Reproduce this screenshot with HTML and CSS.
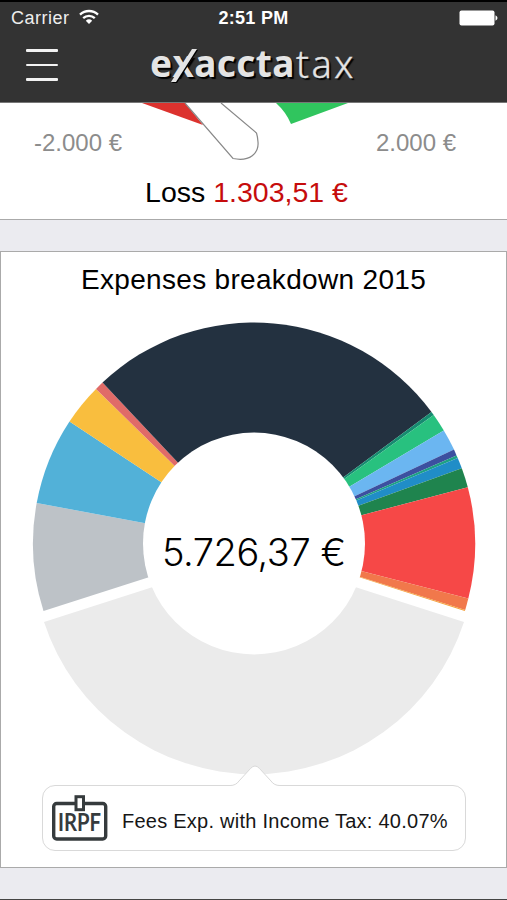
FILE: index.html
```
<!doctype html>
<html>
<head>
<meta charset="utf-8">
<title>Exaccta Tax</title>
<link rel="stylesheet" href="styles.css">
</head>
<body>
<header class="topbar">
  <div class="status">
    <div class="carrier"><span>Carrier</span>
      <svg width="20" height="16" viewBox="0 0 20 16"><g fill="none" stroke="#fff" stroke-width="2.300"><path d="M1 5.6a13 13 0 0 1 18 0"/><path d="M4.2 9.200a8.4 8.4 0 0 1 11.6 0"/></g><path d="M6.8 11.8a4.8 4.8 0 0 1 6.4 0L10 15z" fill="#fff"/></svg>
    </div>
    <div class="clock">2:51 PM</div>
    <div class="battery"><svg width="39" height="16" viewBox="0 0 39 16"><rect x=".5" y=".5" width="35" height="15" rx="2" fill="#fff"/><path d="M36.500 5.200q2 1 2 2.800t-2 2.800z" fill="#fff"/></svg></div>
  </div>
  <nav class="nav">
    <button class="menu" aria-label="Menu"><i></i><i></i><i></i></button>
    <div class="logo"><b>e</b><b class="x">x</b><b>accta</b><span>tax</span>
      <svg class="slash" width="28" height="36" viewBox="0 0 28 36"><path d="M21 1h5L5 34H0z" fill="#e4e4e4"/></svg>
    </div>
  </nav>
</header>
<main>
<section class="card balance">
  <svg class="gauge" width="507" height="62" viewBox="0 0 507 62">
    <path d="M142 0h43l18 22z" fill="#dc322e"/>
    <path d="M276 0h72l-57 21q-5-12-15-21z" fill="#30c55e"/>
    <path d="M185 0l48 55.500C250 59 259 50 258 39Q257.500 33 256.500 30L221 0" fill="#fff" stroke="#888" stroke-width="1.200"/>
  </svg>
  <div class="limits"><span>-2.000 €</span><span>2.000 €</span></div>
  <p class="result">Loss <span class="neg">1.303,51 €</span></p>
</section>
<section class="card breakdown">
  <h2>Expenses breakdown 2015</h2>
  <svg class="donut" width="505" height="478" viewBox="1 300 505 478">
    <path fill="#ebebeb" d="M254 554.500L44 622A221 221 0 0 0 464 622z"/>
    <path fill="#bdc2c7" d="M254 543.500L43.500 611A221 221 0 0 1 36.700 503z"/>
    <path fill="#52b1d8" d="M254 543.500L36.700 503A221 221 0 0 1 69.500 421.500z"/>
    <path fill="#f9be3e" d="M254 543.500L69.500 421.500A221 221 0 0 1 96 389z"/>
    <path fill="#e06b68" d="M254 543.500L96 389A221 221 0 0 1 102.500 382.500z"/>
    <path fill="#233140" d="M254 543.500L102.500 382.500A221 221 0 0 1 431.500 412z"/>
    <path fill="#168b70" d="M254 543.500L431.500 412A221 221 0 0 1 433.700 415z"/>
    <path fill="#28c17f" d="M254 543.500L433.700 415A221 221 0 0 1 443.800 430.500z"/>
    <path fill="#6bb6f1" d="M254 543.500L443.800 430.500A221 221 0 0 1 454 449.500z"/>
    <path fill="#3c50a0" d="M254 543.500L454 449.500A221 221 0 0 1 456.500 455.500z"/>
    <path fill="#1da184" d="M254 543.500L456.500 455.500A221 221 0 0 1 457.700 458z"/>
    <path fill="#208dc7" d="M254 543.500L457.700 458A221 221 0 0 1 461.800 468.300z"/>
    <path fill="#1f844e" d="M254 543.500L461.800 468.300A221 221 0 0 1 467.800 487.300z"/>
    <path fill="#f64847" d="M254 543.500L467.800 487.300A221 221 0 0 1 468.300 598.500z"/>
    <path fill="#f1784b" d="M254 543.500L468.300 598.500A221 221 0 0 1 465.200 609.900z"/>
    <path fill="#f5a13c" d="M254 543.500L465.200 609.900A221 221 0 0 1 464.700 611z"/>
    <circle cx="254" cy="543.500" r="111" fill="#fff"/>
    <text class="total" x="254" y="566" text-anchor="middle" textLength="184">5.726,37 €</text>
  </svg>
  <div class="tip">
    <svg class="arrow" width="50" height="22" viewBox="0 0 50 22"><path d="M0 20.500Q6 20.500 9 16L20.500 3.500Q25-1.500 29.500 3.500L41 16Q44 20.500 50 20.500V22H0z" fill="#fff"/><path d="M0 20.500Q6 20.500 9 16L20.500 3.500Q25-1.500 29.500 3.500L41 16Q44 20.500 50 20.500" fill="none" stroke="#d9d9d9"/></svg>
    <svg class="irpf" width="56" height="46" viewBox="0 0 56 46"><g fill="none" stroke="#363b3d"><rect x="1.700" y="8.500" width="52" height="35.500" rx="3" stroke-width="3.400"/><rect x="24" y="1.700" width="7.500" height="13" fill="#fff" stroke-width="3"/></g><text x="27.500" y="35.500" text-anchor="middle" textLength="43" lengthAdjust="spacingAndGlyphs">IRPF</text></svg>
    <span>Fees Exp. with Income Tax: 40.07%</span>
  </div>
</section>
</main>
</body>
</html>
```
FILE: styles.css
```
*{box-sizing:border-box}
body{margin:0;height:900px;overflow:hidden;background:#ebebf0;border-bottom:1px solid #444;font-family:"Liberation Sans",Arial,sans-serif;color:#000}
svg{display:block}
.topbar{height:103px;background:#333;border-top:2px solid #000;border-bottom:1px solid #777;color:#fff}
.status{display:grid;grid-template-columns:1fr auto 1fr;align-items:center;height:33px;padding:0 9px 0 11px;font-size:18px}
.carrier{display:flex;align-items:center;gap:9px;color:#eee}
.carrier span{letter-spacing:.5px}
.carrier svg{margin-top:-3px}
.clock{font-weight:700;letter-spacing:.3px;margin-left:-2px}
.battery{justify-self:end;margin-top:-2px}
.nav{display:grid;grid-template-columns:150px 1fr;height:60px}
.menu{display:flex;flex-direction:column;gap:12px;width:32px;height:33px;margin:14px 0 0 26px;padding:0;border:0;background:none}
.menu i{width:32px;height:2.600px;background:#f2f2f2;border-radius:1px}
.logo{position:relative;display:flex;height:56px;align-items:center;font-family:"Noto Sans",sans-serif;font-size:37px;line-height:56px;color:#e4e4e4;text-shadow:2px 2px 1px #000}
.logo b{font-weight:700;letter-spacing:.4px}
.logo span{margin-left:1px;font-weight:300;font-size:38px;letter-spacing:2.6px;-webkit-text-stroke:.4px #e4e4e4}
.slash{position:absolute;left:21px;top:13px;filter:drop-shadow(1px 1px 0 #000)}
.card{background:#fff;border:1px solid #aaa}
.balance{height:117px;border-width:0 0 1px}
.gauge{margin-bottom:-35px}
.limits{display:flex;justify-content:space-between;padding:0 51px 0 34px;font-size:24px;line-height:26px;color:#8c8c8c}
.result{margin:20px 0 0;padding-right:14px;text-align:center;font-size:28.500px;line-height:32px}
.neg{color:#c60c0c}
.breakdown{height:617px;margin-top:31px}
h2{margin:0;height:48px;font-size:28px;font-weight:400;line-height:55px;text-align:center;letter-spacing:.32px}
.total{font-family:Inter,sans-serif;font-weight:300;font-size:38px}
.tip{position:relative;display:flex;align-items:center;gap:14px;width:424px;height:66px;margin:7px 0 0 41px;padding:0 0 0 9px;background:#fff;border:1px solid #d9d9d9;border-radius:13px;font-size:20px;color:#161616}
.tip span{margin-top:6px;letter-spacing:.25px;white-space:nowrap}
.arrow{position:absolute;left:187px;top:-21px}
.irpf text{font-family:Lato,sans-serif;font-size:24px;font-weight:700;fill:#363b3d}
```
